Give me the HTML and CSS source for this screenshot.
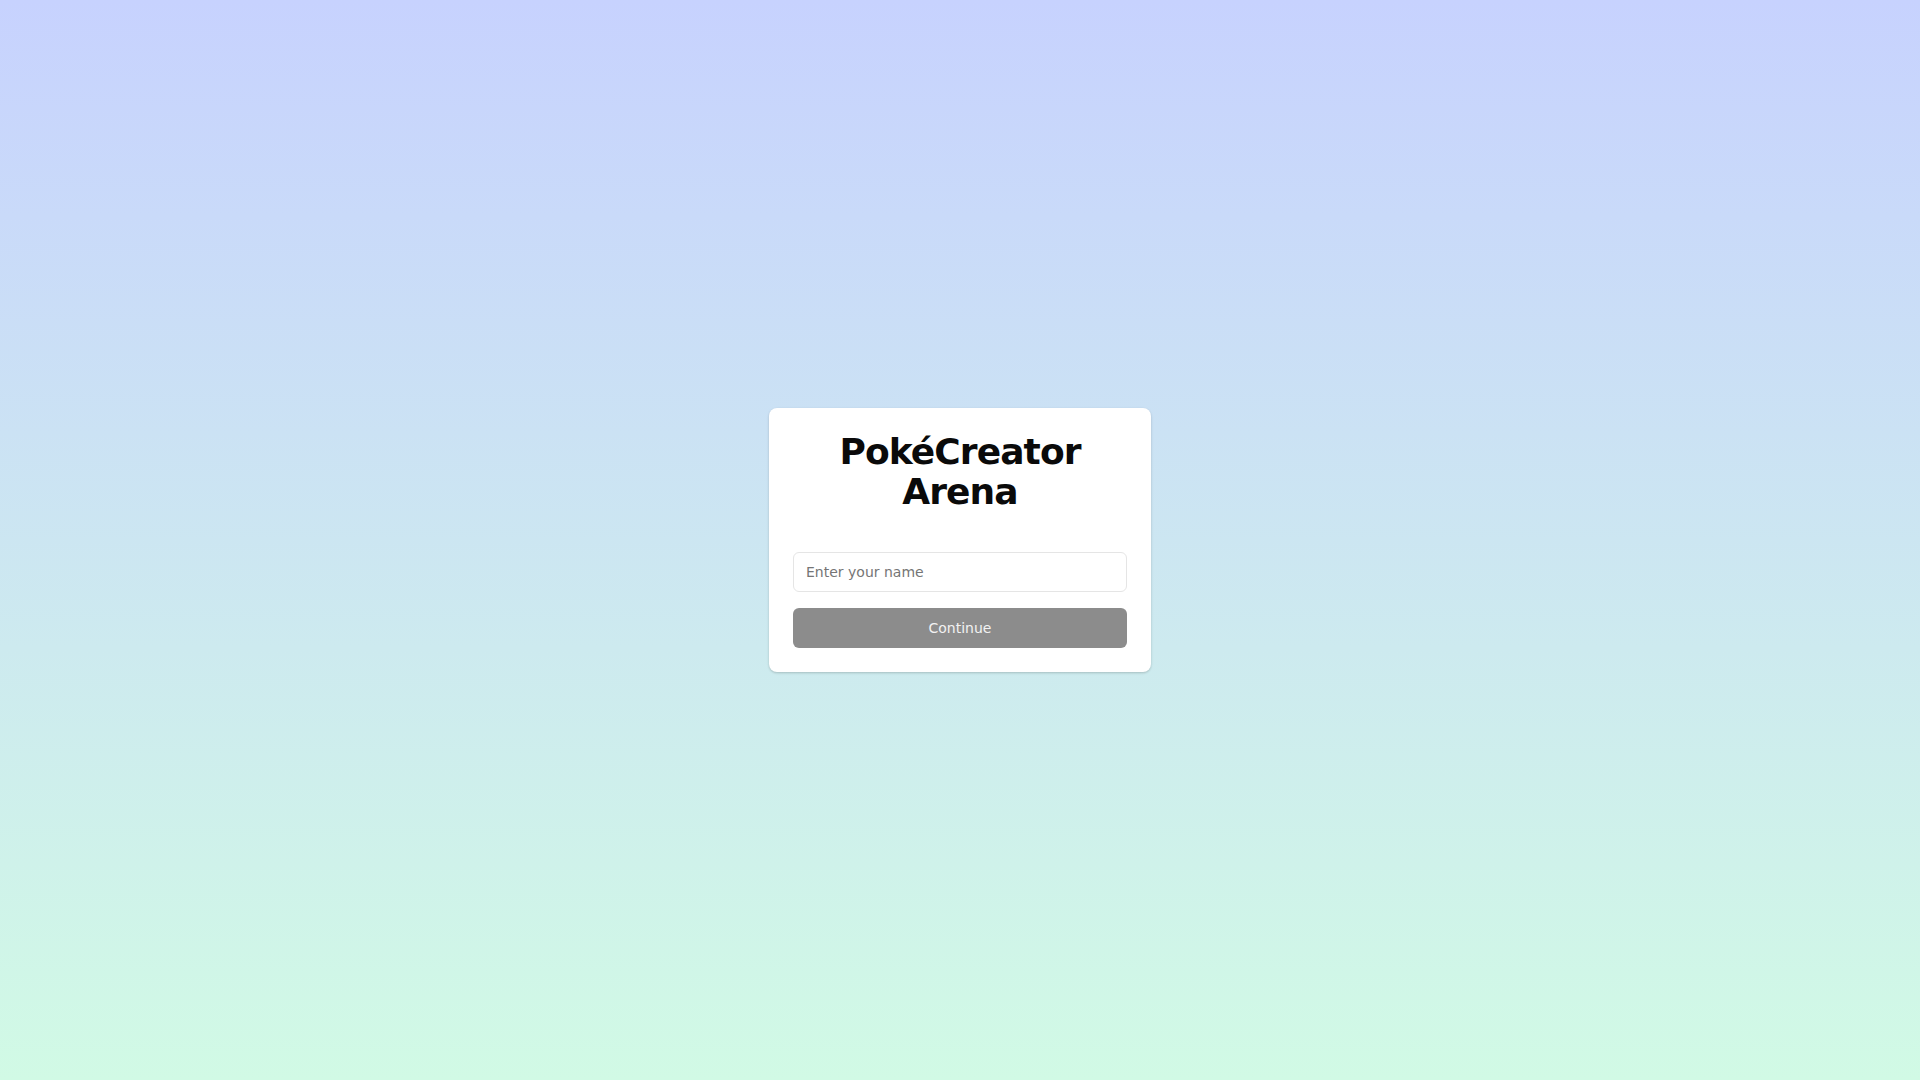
FILE: index.html
```html
<!DOCTYPE html>
<html lang="en">
<head>
<meta charset="utf-8">
<title>PokéCreator Arena</title>
<link rel="stylesheet" href="styles.css">
</head>
<body>
<main class="page">
  <div class="card">
    <h1 class="title">PokéCreator Arena</h1>
    <form class="form">
      <input class="name-input" type="text" placeholder="Enter your name">
      <button class="continue-btn" type="button">Continue</button>
    </form>
  </div>
</main>
</body>
</html>
```
FILE: styles.css
```css
* { box-sizing: border-box; }
html, body { margin: 0; padding: 0; height: 100%; }
body {
  font-family: "DejaVu Sans", sans-serif;
  background: linear-gradient(to bottom, #c7d2fe 0%, #d1fae5 100%);
}
.page {
  min-height: 100vh;
  display: flex;
  align-items: center;
  justify-content: center;
}
.card {
  width: 382px;
  background: #ffffff;
  border-radius: 8px;
  padding: 24px;
  box-shadow: 0 1px 3px rgba(0,0,0,0.12), 0 1px 2px rgba(0,0,0,0.08);
}
.title {
  margin: 0 0 40px 0;
  font-size: 36px;
  line-height: 40px;
  font-weight: 700;
  letter-spacing: -0.025em;
  text-align: center;
  color: #0a0a0a;
}
.form {
  display: flex;
  flex-direction: column;
  gap: 16px;
}
.name-input {
  height: 40px;
  width: 100%;
  border: 1px solid #e5e5e5;
  border-radius: 6px;
  padding: 0 12px;
  font-family: "DejaVu Sans", sans-serif;
  font-size: 14px;
  color: #111;
  background: #fff;
  outline: none;
}
.name-input::placeholder { color: #757575; }
.continue-btn {
  height: 40px;
  width: 100%;
  border: none;
  border-radius: 6px;
  background: #8c8c8c;
  color: #f2f2f2;
  font-family: "DejaVu Sans", sans-serif;
  font-size: 14px;
}
```
